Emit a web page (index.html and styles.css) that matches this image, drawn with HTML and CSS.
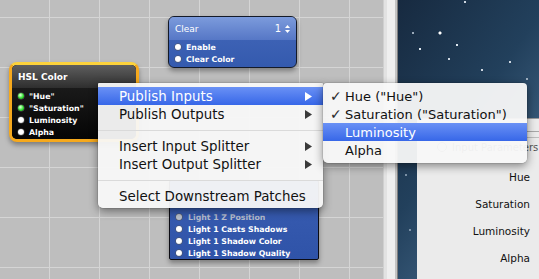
FILE: index.html
```html
<!DOCTYPE html>
<html lang="en">
<head>
  <meta charset="UTF-8">
  <meta name="viewport" content="width=device-width, initial-scale=1.0">
  <title>Quartz Composer - Patch Menu</title>
  <link rel="stylesheet" href="styles.css">
</head>
<body>
  <div class="window">
    <div class="editor">
      <div class="node clear">
        <div class="node-title">
          <span>Clear</span>
          <span class="layer">1
            <svg width="5" height="8" viewBox="0 0 5 8"><polygon points="2.5,0 5,3 0,3" fill="#fff"/><polygon points="0,5 5,5 2.5,8" fill="#fff"/></svg>
          </span>
        </div>
        <div class="node-body">
          <div class="port"><i class="dot"></i>Enable</div>
          <div class="port"><i class="dot"></i>Clear Color</div>
        </div>
      </div>

      <!-- lighting patch, its top part is under the menu -->
      <div class="node lighting">
        <div class="node-body">
          <div class="port dim"><i class="dot"></i>Light 1 Z Position</div>
          <div class="port"><i class="dot"></i>Light 1 Casts Shadows</div>
          <div class="port"><i class="dot"></i>Light 1 Shadow Color</div>
          <div class="port"><i class="dot"></i>Light 1 Shadow Quality</div>
        </div>
      </div>

      <div class="node hsl">
        <div class="node-inner">
          <div class="node-title"><span>HSL Color</span></div>
          <div class="node-body">
            <div class="port"><i class="dot green"></i>"Hue"</div>
            <div class="port"><i class="dot green"></i>"Saturation"</div>
            <div class="port"><i class="dot"></i>Luminosity</div>
            <div class="port"><i class="dot"></i>Alpha</div>
          </div>
        </div>
      </div>
    </div>

    <div class="divider"></div>

    <div class="viewer">
      <div class="params">
        <div class="params-top"></div>
        <div class="params-bar"></div>
        <div class="params-title"><span class="gear"></span>Input Parameters</div>
        <ul class="param-list">
          <li>Hue</li>
          <li>Saturation</li>
          <li>Luminosity</li>
          <li>Alpha</li>
        </ul>
      </div>
    </div>
  </div>

  <!-- context menu -->
  <ul class="menu main-menu">
    <li class="item active">Publish Inputs <svg class="arrow" width="7" height="9" viewBox="0 0 7 9"><polygon points="0,0 7,4.5 0,9"/></svg></li>
    <li class="item">Publish Outputs <svg class="arrow" width="7" height="9" viewBox="0 0 7 9"><polygon points="0,0 7,4.5 0,9"/></svg></li>
    <li class="sep"></li>
    <li class="item">Insert Input Splitter <svg class="arrow" width="7" height="9" viewBox="0 0 7 9"><polygon points="0,0 7,4.5 0,9"/></svg></li>
    <li class="item">Insert Output Splitter <svg class="arrow" width="7" height="9" viewBox="0 0 7 9"><polygon points="0,0 7,4.5 0,9"/></svg></li>
    <li class="sep"></li>
    <li class="item">Select Downstream Patches</li>
  </ul>

  <ul class="menu sub-menu">
    <li class="item"><span class="check">✓</span>Hue ("Hue")</li>
    <li class="item"><span class="check">✓</span>Saturation ("Saturation")</li>
    <li class="item active"><span class="check"></span>Luminosity</li>
    <li class="item"><span class="check"></span>Alpha</li>
  </ul>
</body>
</html>
```

FILE: styles.css
```css
body {
  margin: 0;
  width: 539px;
  height: 279px;
  overflow: hidden;
  font-family: "DejaVu Sans", Verdana, sans-serif;
  position: relative;
}
.window {
  display: flex;
  height: 279px;
}

/* patch editor */
.editor {
  width: 383px;
  position: relative;
  background-color: #bebebe;
  background-image:
    linear-gradient(to right, #d5d5d5 1px, transparent 1px),
    linear-gradient(#d5d5d5 1px, transparent 1px);
  background-size: 50px 50px;
  background-position: 49px 17px;
}
.node {
  position: absolute;
  color: #fff;
  font-weight: bold;
  font-size: 7.8px;
  box-shadow: 0 3px 5px rgba(0, 0, 0, 0.35);
}
.node-title {
  display: flex;
  justify-content: space-between;
  align-items: center;
  padding: 0 6px;
  font-size: 9px;
}
.node-body {
  padding-top: 2px;
}
.port {
  display: flex;
  align-items: center;
  height: 12px;
  padding-left: 6px;
  gap: 5px;
  white-space: nowrap;
}
.dot {
  width: 6px;
  height: 6px;
  border-radius: 50%;
  background: radial-gradient(circle at 40% 35%, #fff 50%, #cfcfcf);
  box-shadow: 0 0 0 0.5px #555;
  flex: none;
}
.dot.green {
  background: radial-gradient(circle at 40% 35%, #c8ffc0 10%, #35e035 55%, #139c13);
}

.clear {
  left: 168px;
  top: 16px;
  width: 127px;
  height: 50px;
  border: 1px solid #141a28;
  border-radius: 6px;
  background: linear-gradient(#4468ba, #345aae);
  overflow: hidden;
}
.clear .node-title {
  height: 23px;
  font-weight: normal;
  background: linear-gradient(#7c9bdc, #5677c6);
}
.clear .node-body {
  padding-top: 1px;
}
.layer {
  display: flex;
  align-items: center;
  gap: 4px;
  font-size: 10px;
}

.lighting {
  left: 169px;
  top: 180px;
  width: 148px;
  height: 78px;
  border: 1px solid #0c0c14;
  border-radius: 2px;
  background: linear-gradient(#3a5eb3, #2f53a8);
}
.lighting .node-body {
  padding-top: 30px;
}
.lighting .port {
  gap: 6px;
}
.port.dim {
  color: #b4bccd;
}
.port.dim .dot {
  background: #b8bfcc;
}

.hsl {
  left: 9px;
  top: 62px;
  width: 124px;
  height: 74px;
  border: 3px solid #f6a91d;
  border-top-color: #fcd23c;
  border-radius: 8px;
  background: #000;
}
.node-inner {
  height: 100%;
  border-radius: 5px;
  overflow: hidden;
  background: linear-gradient(#232323, #050505);
}
.hsl .node-title {
  height: 23px;
  background: linear-gradient(#5e5e5e, #2e2e2e);
}

/* split view */
.divider {
  width: 15px;
  background: linear-gradient(to right, #cfcfcf 0 1px, #e2e2e2 1px 4px, #efefef 4px 12px, #c4c4c4 12px 14px, #7d7d7d 14px 15px);
}
.viewer {
  flex: 1;
  display: flex;
  flex-direction: column;
  padding: 118px 0 0 19px;
  background-color: #203850;
  background-image:
    radial-gradient(circle at 42px 33px, #fff 1.3px, transparent 1.8px),
    radial-gradient(circle at 22px 49px, #dfe8f0 0.8px, transparent 1.4px),
    radial-gradient(circle at 59px 45px, #dfe8f0 0.8px, transparent 1.4px),
    radial-gradient(circle at 51px 59px, #cfd8e2 0.7px, transparent 1.3px),
    radial-gradient(circle at 84px 70px, #cfd8e2 0.7px, transparent 1.3px),
    radial-gradient(circle at 112px 62px, #cfd8e2 0.7px, transparent 1.3px),
    radial-gradient(circle at 67px 2px, #cfd8e2 0.7px, transparent 1.3px),
    radial-gradient(circle at 15px 33px, #b6c4d2 0.6px, transparent 1.2px),
    radial-gradient(circle at 129px 79px, #b6c4d2 0.6px, transparent 1.2px),
    radial-gradient(circle at 8px 175px, #8ea2b6 0.6px, transparent 1.2px),
    radial-gradient(circle at 12px 230px, #8ea2b6 0.6px, transparent 1.2px),
    linear-gradient(125deg, #172a40 0%, #22405c 45%, #3d5f7f 75%, #4c6d8b 100%);
}
.params {
  flex: 1;
  background: #ebebeb;
  border-top: 1px solid #9a9a9a;
  color: #111;
}
.params-top {
  height: 12px;
  border-bottom: 1px solid #a8a8a8;
}
.params-bar {
  height: 5px;
  border-bottom: 1px solid #bdbdbd;
}
.params-title {
  display: flex;
  align-items: center;
  gap: 5px;
  height: 18px;
  padding-left: 20px;
  font-size: 10px;
  color: #555;
}
.gear {
  width: 8px;
  height: 8px;
  border: 1px solid #888;
  border-radius: 50%;
}
.param-list {
  list-style: none;
  margin: 0;
  padding: 8px 9px 0 0;
  text-align: right;
  font-size: 10.5px;
}
.param-list li {
  height: 27px;
  line-height: 27px;
}

/* menus */
.menu {
  position: absolute;
  top: 83px;
  margin: 0;
  padding: 4px 0 3px;
  list-style: none;
  background: rgba(248, 248, 248, 0.95);
  border-radius: 1px 1px 5px 5px;
  box-shadow: 0 3px 10px rgba(0, 0, 0, 0.45), 0 0 0 0.5px rgba(0, 0, 0, 0.15);
  font-size: 13.4px;
  color: #111;
}
.main-menu {
  left: 98px;
  width: 225px;
}
.sub-menu {
  left: 323px;
  width: 204px;
  padding-bottom: 4px;
  border-radius: 4px 4px 5px 5px;
  font-size: 13px;
}
.item {
  display: flex;
  align-items: center;
  height: 18px;
  white-space: nowrap;
}
.main-menu .item {
  justify-content: space-between;
  padding: 0 11px 0 21px;
}
.sub-menu .item {
  padding-left: 7px;
}
.item.active {
  color: #fff;
  background: linear-gradient(#6a91f5, #3767e8);
}
.arrow {
  fill: #3a3a3a;
}
.active .arrow {
  fill: #fff;
}
.sep {
  height: 1px;
  margin: 7px 0 6px;
  background: #dadada;
}
.check {
  width: 15px;
  color: #2a2a2a;
  font-size: 14px;
  font-weight: bold;
}
```
